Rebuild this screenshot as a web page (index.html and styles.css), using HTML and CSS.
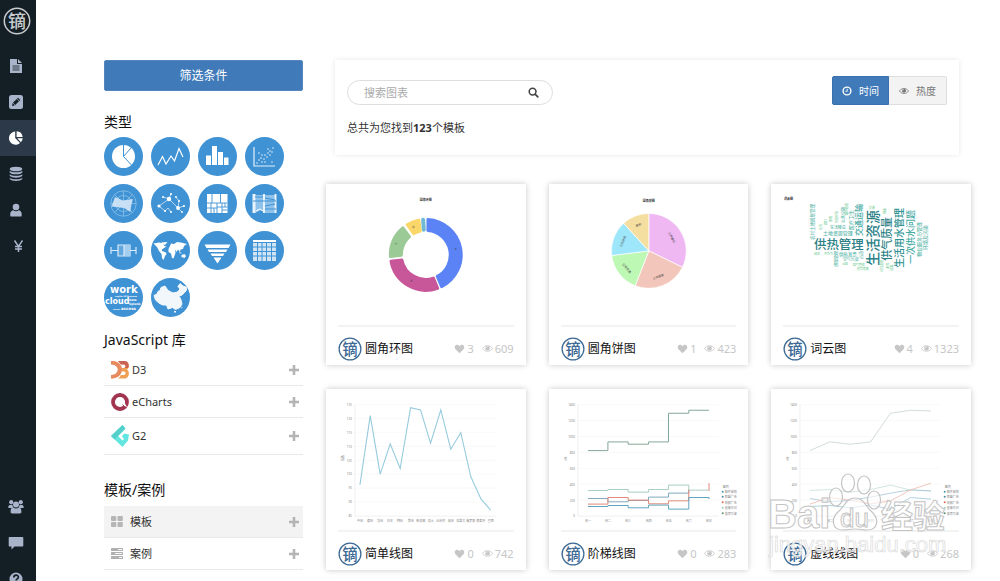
FILE: index.html
```html
<!DOCTYPE html>
<html lang="zh-CN">
<head>
<meta charset="utf-8">
<title>图表模板</title>
<link rel="stylesheet" href="styles.css">
</head>
<body>
<svg class="defs" aria-hidden="true">
  <defs>
    <symbol id="logo" viewBox="0 0 28 28">
      <circle cx="14" cy="14" r="12.7" fill="none" stroke="currentColor" stroke-width="1.5"/>
      <text class="logo-text" x="14" y="20.500" text-anchor="middle">镝</text>
    </symbol>
    <symbol id="heart" viewBox="0 0 12 12"><path d="M6 11L1.200 6.300C-0.800 4 0.600 1 3 1C4.500 1 5.400 1.700 6 2.800C6.600 1.700 7.500 1 9 1C11.400 1 12.800 4 10.800 6.300z" fill="currentColor"/></symbol>
    <symbol id="eye" viewBox="0 0 14 10"><path d="M.6 5C3.600.3 10.400.3 13.400 5 10.400 9.600 3.600 9.600.6 5z" fill="none" stroke="currentColor" stroke-width="1.100"/><circle cx="7" cy="4.600" r="2.900" fill="currentColor"/><path d="M5.300 4.400A1.800 1.800 0 0 1 7 2.700" fill="none" stroke="#fff" stroke-width=".7"/></symbol>
    <symbol id="plus" viewBox="0 0 10 10"><path d="M5 .5v9M.5 5h9" stroke="currentColor" stroke-width="2.600" stroke-linecap="round" fill="none"/></symbol>
    <symbol id="axes" viewBox="0 0 200 141">
      <path d="M29 15.700H170M29 31.600H170M29 47.600H170M29 63.500H170M29 79.500H170M29 95.400H170M29 111.400H170" stroke="#f6f6f6" stroke-width=".7"/>
      <path d="M29 15.700V127.300H170" fill="none" stroke="#ececec" stroke-width=".8"/>
      <g class="tick" text-anchor="end"><text x="26" y="17">1400</text><text x="26" y="33">1200</text><text x="26" y="49">1000</text><text x="26" y="65">800</text><text x="26" y="81">600</text><text x="26" y="97">400</text><text x="26" y="113">200</text><text x="26" y="128">0</text></g>
      <text class="tick" x="15" y="71">值</text>
      <g class="tick" text-anchor="middle"><text x="39" y="133">周一</text><text x="59" y="133">周二</text><text x="79" y="133">周三</text><text x="100" y="133">周四</text><text x="120" y="133">周五</text><text x="140" y="133">周六</text><text x="160" y="133">周日</text></g>
      <g class="tick"><text x="174" y="99">图例</text><text x="176" y="104">邮件营销</text><text x="176" y="109">联盟广告</text><text x="176" y="115">视频广告</text><text x="176" y="120">直接访问</text><text x="176" y="126">搜索引擎</text></g>
      <circle cx="174" cy="102.800" r="1" fill="#3e9bb5"/><circle cx="174" cy="108" r="1" fill="#4c8aa8"/><circle cx="174" cy="113.500" r="1" fill="#dc6b55"/><circle cx="174" cy="119" r="1" fill="#9fcdbf"/><circle cx="174" cy="124.500" r="1" fill="#5f917c"/>
    </symbol>
  </defs>
</svg>

<div class="app">
  <nav class="rail" aria-label="主导航">
    <a class="rail-logo" href="#home" aria-label="首页"><svg><use href="#logo"/></svg></a>
    <a class="rail-item" href="#files" aria-label="文件"><svg viewBox="0 0 14 16"><path fill="currentColor" d="M1 1h7v5h5v9H1z"/><path fill="currentColor" d="M9 1l4 4H9z"/><path d="M3.500 8h7M3.500 10h7M3.500 12h7" stroke="#141e25" stroke-width=".8"/></svg></a>
    <a class="rail-item" href="#edit" aria-label="编辑"><svg viewBox="0 0 14 16"><rect y="1" width="14" height="14" rx="2.500" fill="currentColor"/><path d="M3 12l.7-3L9 3.700 11.300 6 6 11.300z" fill="#141e25"/><path d="M8 5l2.200 2.200M4 9l2 2" stroke="#a9b4cb" stroke-width=".7"/></svg></a>
    <a class="rail-item rail-active" href="#charts" aria-label="图表"><svg viewBox="0 0 14 16"><path fill="currentColor" d="M6.200 1.500V8l4.800 5A6.600 6.600 0 1 1 6.200 1.500z"/><path fill="currentColor" d="M7.600 1.200a6.400 6.400 0 0 1 6 5.800h-6zM8.200 8.200h5.500a6 6 0 0 1-1.800 4z"/></svg></a>
    <a class="rail-item" href="#data" aria-label="数据"><svg viewBox="0 0 14 16"><g fill="currentColor"><ellipse cx="7" cy="3" rx="6.300" ry="2.300"/><path d="M.7 4.800c2 2 10.600 2 12.600 0v1.600c-1.500 2.600-11.100 2.600-12.600 0zM.7 8.300c2 2 10.600 2 12.600 0v1.500c-1.500 2.600-11.100 2.600-12.600 0zM.7 11.700c2 2 10.600 2 12.600 0v1.400c-1.500 2.600-11.100 2.600-12.600 0z"/></g></svg></a>
    <a class="rail-item" href="#user" aria-label="用户"><svg viewBox="0 0 14 16"><circle cx="7" cy="5" r="3.300" fill="currentColor"/><path d="M1.500 14.500c-1-4 1-6 2.700-6.200 1.600 1.300 4 1.300 5.600 0 1.700.2 3.700 2.200 2.700 6.200z" fill="currentColor"/></svg></a>
    <a class="rail-item" href="#price" aria-label="价格"><svg viewBox="0 0 14 16"><path d="M5.500 2.500l4 6 4-6M9.500 8v6M6 8.500h7M6 11h7" fill="none" stroke="currentColor" stroke-width="1.500"/></svg></a>
    <div class="rail-bottom">
      <a class="rail-item" href="#team" aria-label="团队"><svg class="wide" viewBox="0 0 16 16"><g fill="currentColor"><circle cx="3.200" cy="3.200" r="2.100"/><circle cx="12.800" cy="3.200" r="2.100"/><circle cx="8" cy="5.500" r="3"/><path d="M.5 9c-.5-2.500.5-3.500 3.800-3.300.2 1.200.5 2 1.200 2.800L3.500 9zM15.500 9c.5-2.500-.5-3.500-3.800-3.300-.2 1.200-.5 2-1.200 2.800l2 .5zM2.800 14c-.8-4 1-5.500 2.600-5.500 1.500 1.200 3.700 1.200 5.200 0 1.600 0 3.400 1.500 2.600 5.500-.2.800-10.200.8-10.400 0z"/></g></svg></a>
      <a class="rail-item" href="#chat" aria-label="消息"><svg class="wide" viewBox="0 0 16 16"><path d="M1.500 2h13q.8 0 .8.800v8q0 .8-.8.800H6.500L3.500 14.500v-2.900h-2q-.8 0-.8-.8v-8q0-.8.8-.8z" fill="currentColor"/></svg></a>
      <a class="rail-item" href="#help" aria-label="帮助"><svg viewBox="0 0 14 16"><circle cx="7" cy="8" r="6.500" fill="currentColor"/><path d="M4.800 6.500c0-3.200 4.600-3 4.600-.3 0 1.700-2.300 1.600-2.300 3.200M7 10.500v1.700" fill="none" stroke="#141e25" stroke-width="1.700"/></svg></a>
    </div>
  </nav>

  <aside class="filters">
    <button class="filter-button" type="button">筛选条件</button>

    <h2 class="heading">类型</h2>
    <div class="types">
      <button class="type" type="button" aria-label="饼图"><svg viewBox="0 0 39 39"><circle cx="19.500" cy="19.500" r="11.500" fill="#fff"/><path d="M19.500 8v11.500l7.500-8.500M19.500 19.500l8 8.500" fill="none" stroke="#3f92d4" stroke-width="1"/></svg></button>
      <button class="type" type="button" aria-label="折线图"><svg viewBox="0 0 39 39"><path d="M7 28L11.500 19.500L15 27L20 19L23.500 24L28 11.500L32 20" fill="none" stroke="#fff" stroke-width="1.200"/></svg></button>
      <button class="type" type="button" aria-label="柱状图"><svg viewBox="0 0 39 39"><path d="M8 18.500h5V28H8zM14 9h5v19h-5zM20 15h5v13h-5zM26 20.500h4.500V28H26z" fill="#fff"/></svg></button>
      <button class="type" type="button" aria-label="散点图"><svg viewBox="0 0 39 39"><path d="M9 10v19h21" fill="none" stroke="#e5f0fa" stroke-width="1.200"/><path d="M12 26h.01M14 23h.01M17 25h.01M16 21h.01M19 22h.01M20 18h.01M17 18h.01M22 20h.01M23 16h.01M25 14h.01M28 11h.01M27 15h.01M20 25h.01M25 18h.01M27 25h.01M14 16h.01M23 12h.01" stroke="#fff" stroke-width="1.400" stroke-linecap="round"/></svg></button>
      <button class="type" type="button" aria-label="雷达图"><svg viewBox="0 0 39 39"><g fill="none" stroke="#8cc1ea" stroke-width=".8"><circle cx="19.500" cy="19.500" r="12.700"/><circle cx="19.500" cy="19.500" r="8"/><path d="M19.500 7v25M7 19.500h25M10.500 10.500l18 18M28.500 10.500l-18 18"/></g><path d="M11 13L19 16.500L29 15L27 21L26.500 28L20 24L7.500 22.500z" fill="#d4e7f7" opacity=".9"/></svg></button>
      <button class="type" type="button" aria-label="关系图"><svg viewBox="0 0 39 39"><path d="M18 15L8 22M18 15l9 9 6-2M18 15l2-5M18 15l-6-2M14 27l3-3 3 4M8 22l6 5M27 24l1-7-3-4M27 24l4 4" fill="none" stroke="#d9eaf8" stroke-width=".8"/><g fill="#fff"><circle cx="18" cy="15" r="2.200"/><circle cx="27" cy="24" r="1.900"/><circle cx="8" cy="22" r="1.600"/><circle cx="20" cy="10" r="1.100"/><circle cx="12" cy="13" r="1"/><circle cx="14" cy="27" r="1.100"/><circle cx="20" cy="28" r="1"/><circle cx="33" cy="22" r="1.100"/><circle cx="28" cy="17" r="1"/><circle cx="25" cy="13" r="1"/><circle cx="31" cy="28" r=".9"/></g></svg></button>
      <button class="type" type="button" aria-label="矩形树图"><svg viewBox="0 0 39 39"><path d="M9 10h20.500v19H9z" fill="#fff"/><path d="M9 19h20.500M14 10v9M22.500 10v9M19 19v10M9 24h10M13 19v10M24 19v10M19 23h10.500M24 26h5.500M27 19v4M16 24v5" fill="none" stroke="#3f92d4" stroke-width=".9"/></svg></button>
      <button class="type" type="button" aria-label="桑基图"><svg viewBox="0 0 39 39"><path d="M10 11h21v18H20l-4-3-6 3z" fill="#8fc2eb"/><path d="M7.500 10h3v19h-3zM18 10h2v19h-2zM29.500 10h2v19h-2z" fill="#e9f3fb"/><path d="M8 17h23M20 14l10 2M20 22l10-2M20 25h11M10 13h8" stroke="#3f92d4" fill="none"/><path d="M11 27l4-2 3 2" fill="none" stroke="#fff"/></svg></button>
      <button class="type" type="button" aria-label="箱线图"><svg viewBox="0 0 39 39"><path d="M14 14h12v11H14z" fill="#62a8df" stroke="#d9eaf8" stroke-width="1.200"/><path d="M20 14h6v11h-6z" fill="#a4cef0"/><path d="M20 14v11M7 16v7M32 16v7M7 19.500h7M26 19.500h6" stroke="#d9eaf8" stroke-width="1.200" fill="none"/></svg></button>
      <button class="type" type="button" aria-label="世界地图"><svg viewBox="0 0 39 39"><path fill="#fff" d="M2.500 12.500L8 11.500L12 12.500L13.500 15L15.500 15.500L13 17L11 18.500L11 20L15 21.500L15.500 23L14 25L12.500 29L11 27L10.500 23L8 20L6 16L4 14zM10 11.500L16.500 11L14 14zM17.500 18L19 15L20 12.500L23 13L26 11L30 11.500L36 13L33 15L32 18L29.500 18.500L29 21L27 18.500L25.500 21L24 18.500L24.500 22L22.500 27.500L21 27L20 22.500L17.500 21zM30.500 24L33.500 23L35 25L33.500 27L30.500 26zM28 21L31 22L29 22.500z"/></svg></button>
      <button class="type" type="button" aria-label="漏斗图"><svg viewBox="0 0 39 39"><path fill="#fff" d="M6.500 13.500h26l-2 3.500h-22zM9.500 18.500h20l-1.500 2.500H11zM12.500 22.500h14L25 25H14zM15.500 26.500h8l-4 6z"/></svg></button>
      <button class="type" type="button" aria-label="表格"><svg viewBox="0 0 39 39"><path d="M8 9h23v21H8z" fill="#cfe5f6"/><path d="M8 11.500h23M8 16h23M8 20.500h23M8 25h23M12.500 12v18M17 12v18M21.500 12v18M26.500 12v18" stroke="#3f92d4"/><path d="M8 9h23v2H8z" fill="#fff"/></svg></button>
      <button class="type" type="button" aria-label="词云"><svg class="cloud-icon" viewBox="0 0 39 39"><text x="6" y="15" font-size="10">work</text><text x="1" y="26" font-size="8">cloud</text><text x="11" y="19" font-size="2">csgilhs lifl Business</text><text x="25" y="23" font-size="3">data</text><text x="25" y="27" font-size="3">Splunk</text><text x="17" y="32" font-size="4">access</text><text x="9" y="32" font-size="2">server</text></svg></button>
      <button class="type" type="button" aria-label="中国地图"><svg viewBox="0 0 39 39"><path fill="#f2f7fc" stroke="#f2f7fc" stroke-linejoin="round" d="M3 17.500L6 16L7 13.500L9 12.500L10 9.500L14 8L17 12.500L22 15L26.500 14L29 11L27 8.500L29 5.500L32 8L36 9.500L35 13L31 17L27.500 18.500L29 19.500L30 22L31 26L29 29.500L24.500 31.500L21.500 29.500L17 31L15.500 27L12 27L8.500 25.500L4.500 22z"/><path fill="#f2f7fc" d="M23 33h2v1.500h-2zM30.500 28.500l1 .5-.7 2z"/></svg></button>
    </div>

    <h2 class="heading">JavaScript 库</h2>
    <ul class="list">
      <li class="row"><svg class="lib-icon" viewBox="0 0 18 18"><path d="M0 0h2c12 1 12 16 0 17.500H0V14c9-.5 9-10 0-10.500z" fill="#e78a5d"/><path d="M7 0h6c5.500 0 6 6.500 3 8.500 3.500 2.500 2 9-3 9H7c1.500-1 2-2 3-3.500h3c2 0 2-3.500 0-3.500h-2V7h2c2 0 2-3.500 0-3.500h-3C9 2 8 1 7 0z" fill="#f0a052"/><path d="M7 0h6c5 0 5.500 5 4 7h-6V7h2c2 0 2-3.500 0-3.500h-3z" fill="#c96354"/></svg><span class="row-name">D3</span><button class="add" type="button" aria-label="展开 D3"><svg><use href="#plus"/></svg></button></li>
      <li class="row"><svg class="lib-icon" viewBox="0 0 18 18"><circle cx="9" cy="9" r="7" fill="none" stroke="#a23450" stroke-width="3.800"/><path d="M9.500 9l4 .5 2.500 4.500-3-1z" fill="#fff"/><path d="M11.500 11.500l2 2" stroke="#a23450" stroke-width="1"/></svg><span class="row-name">eCharts</span><button class="add" type="button" aria-label="展开 eCharts"><svg><use href="#plus"/></svg></button></li>
      <li class="row row-tall"><svg class="lib-icon lib-g2" viewBox="0 0 18 22"><path d="M11.500 0l3 3.500L7 11l4.500 4.500 1.500-1.500-2-2.500 2-3 5 1-1 6-5.500 6.500L0 11z" fill="#62e6df"/><path d="M11.500 0l3 3.500L7 11l-3.500 3.500L0 11z" fill="#54cfca"/></svg><span class="row-name">G2</span><button class="add" type="button" aria-label="展开 G2"><svg><use href="#plus"/></svg></button></li>
    </ul>

    <h2 class="heading heading-spaced">模板/案例</h2>
    <ul class="list">
      <li class="row row-selected"><svg class="kind-icon" viewBox="0 0 12 11"><g fill="#b5b5b5"><rect width="5.300" height="5" rx="1"/><rect x="6.500" width="5.300" height="5" rx="1"/><rect y="6" width="5.300" height="5" rx="1"/><rect x="6.500" y="6" width="5.300" height="5" rx="1"/></g></svg><span class="row-name">模板</span><button class="add" type="button" aria-label="展开模板"><svg><use href="#plus"/></svg></button></li>
      <li class="row"><svg class="kind-icon" viewBox="0 0 12 11"><g fill="#b0b0b0"><rect width="12" height="3" rx=".5"/><rect y="4" width="12" height="3" rx=".5"/><rect y="8" width="12" height="3" rx=".5"/></g><path d="M7 1.500h4M4 5.500h7M8 9.500h3" stroke="#fff" stroke-width=".9"/></svg><span class="row-name">案例</span><button class="add" type="button" aria-label="展开案例"><svg><use href="#plus"/></svg></button></li>
    </ul>
  </aside>

  <main class="content">
    <section class="panel">
      <div class="panel-left">
        <form class="search">
          <input class="search-input" type="search" placeholder="搜索图表" aria-label="搜索图表">
          <button class="search-button" type="button" aria-label="搜索"><svg viewBox="0 0 12 12"><circle cx="5" cy="5" r="3.700" fill="none" stroke="#444" stroke-width="1.700"/><path d="M8 8l2.700 2.700" stroke="#444" stroke-width="1.900" stroke-linecap="round"/></svg></button>
        </form>
        <p class="count">总共为您找到<b>123</b>个模板</p>
      </div>
      <div class="sort">
        <button class="sort-button sort-active" type="button" aria-pressed="true"><svg viewBox="0 0 10 10"><circle cx="5" cy="5" r="3.900" fill="none" stroke="currentColor" stroke-width="1.400"/><path d="M5.200 2.800v2.500H3.500" fill="none" stroke="currentColor" stroke-width=".9"/></svg>时间</button>
        <button class="sort-button" type="button" aria-pressed="false"><svg><use href="#eye"/></svg>热度</button>
      </div>
    </section>

    <section class="cards">
      <article class="card">
        <svg class="chart" viewBox="0 0 200 141">
          <text class="chart-title" x="100" y="17" text-anchor="middle">圆角环图</text>
          <g stroke-width="3" stroke-linejoin="round">
            <path d="M102.100 35.600A35.500 35.500 0 0 1 115.800 102.800L111.500 92.600A24.500 24.500 0 0 0 102.100 46.600z" fill="#5b83f5" stroke="#5b83f5"/>
            <path d="M111.900 104.400A35.500 35.500 0 0 1 65.100 77.400L76 76.100A24.500 24.500 0 0 0 107.600 94.300z" fill="#c8579a" stroke="#c8579a"/>
            <path d="M64.500 72.600A35.500 35.500 0 0 1 77 44L83.600 52.800A24.500 24.500 0 0 0 75.500 71.400z" fill="#9bca96" stroke="#9bca96"/>
            <path d="M81.400 40.800A35.500 35.500 0 0 1 93 36.200L94.500 47.100A24.500 24.500 0 0 0 87.800 49.800z" fill="#fbd669" stroke="#fbd669"/>
            <path d="M97.300 35.900L98 45.800" stroke="#6fb9d5" stroke-width="4" stroke-linecap="round"/>
          </g>
          <g class="slice" text-anchor="middle"><text transform="translate(129 65) rotate(80)">A</text><text transform="translate(85 98) rotate(30)">B</text><text transform="translate(71 60) rotate(-70)">C</text><text transform="translate(88 44) rotate(-20)">D</text></g>
        </svg>
        <footer class="card-footer"><svg class="avatar"><use href="#logo"/></svg><a class="card-title" href="#t1">圆角环图</a><span class="stat"><svg class="i-heart"><use href="#heart"/></svg>3</span><span class="stat"><svg class="i-eye"><use href="#eye"/></svg>609</span></footer>
      </article>

      <article class="card">
        <svg class="chart" viewBox="0 0 200 141">
          <text class="chart-title" x="100" y="18" text-anchor="middle">圆角饼图</text>
          <g stroke="#fff" stroke-width=".7" stroke-linejoin="round">
            <path d="M100 67V29.500A37.500 37.500 0 0 1 133.700 83.400z" fill="#efb8f3"/>
            <path d="M100 67L133.700 83.400A37.500 37.500 0 0 1 86.300 101.900z" fill="#f3c6bb"/>
            <path d="M100 67L86.300 101.900A37.500 37.500 0 0 1 62.800 71.600z" fill="#bdf8b5"/>
            <path d="M100 67L62.800 71.600A37.500 37.500 0 0 1 74.700 39.300z" fill="#9ee7fb"/>
            <path d="M100 67L74.700 39.300A37.500 37.500 0 0 1 100 29.500z" fill="#f5dfa0"/>
          </g>
          <g class="slice" text-anchor="middle"><text transform="translate(122 54) rotate(62)">公共建设</text><text transform="translate(110 94) rotate(-20)">公共服务</text><text transform="translate(77 85) rotate(50)">公共交通</text><text transform="translate(75 58) rotate(-66)">公共环境</text><text transform="translate(90 42) rotate(-20)">其他</text></g>
        </svg>
        <footer class="card-footer"><svg class="avatar"><use href="#logo"/></svg><a class="card-title" href="#t2">圆角饼图</a><span class="stat"><svg class="i-heart"><use href="#heart"/></svg>1</span><span class="stat"><svg class="i-eye"><use href="#eye"/></svg>423</span></footer>
      </article>

      <article class="card">
        <svg class="chart words" viewBox="0 0 200 141">
          <text class="chart-title" x="13" y="16">词云图</text>
          <g class="words-main" fill="#2c7f86"><text x="43" y="65" font-size="12.500">供热管理</text><text transform="translate(107 82) rotate(-90)" font-size="14">生活资源</text><text transform="translate(120 77) rotate(-90)" font-size="11">供气质量</text></g>
          <g class="words-main" fill="#2f9191"><text transform="translate(132 84) rotate(-90)" font-size="10">生活用水管理</text></g>
          <g class="words-main" fill="#46a9a3"><text transform="translate(143 80) rotate(-90)" font-size="9">一次供水问题</text><text transform="translate(91 52) rotate(-90)" font-size="8">交通运输</text></g>
          <g class="words-main" fill="#5fb9ac" font-size="5"><text transform="translate(150 73) rotate(-90)">物业服务与管理</text><text transform="translate(156 66) rotate(-90)">环境及污染</text><text transform="translate(43 56) rotate(-90)" font-size="4.500">农村土地规划管理</text><text x="52" y="51">土地资源管理</text><text x="59" y="45" font-size="4">生活噪音</text><text transform="translate(82 46) rotate(-90)">医疗卫生</text><text transform="translate(74 39) rotate(-90)" font-size="4">公共设施</text><text x="68" y="72" font-size="4.500">供热发票</text><text x="72" y="77" font-size="4">空气污染</text><text transform="translate(67 83) rotate(-90)" font-size="4">供暖管理</text><text transform="translate(92 75) rotate(-90)" font-size="4">占道</text></g>
          <g class="words-main" fill="#7bcf9a" font-size="3"><text transform="translate(67 39) rotate(-90)">市容环境</text><text transform="translate(77 31) rotate(-90)">噪声管理</text><text transform="translate(61 38) rotate(-90)">照明</text><text transform="translate(56 41) rotate(-90)">路灯</text><text transform="translate(51 46) rotate(-90)">信号</text><text x="43" y="71">绿化</text><text x="53" y="71">不作为</text><text x="71" y="81">公园</text><text x="82" y="82">煤气管道</text><text x="86" y="86">违章建筑</text><text x="98" y="25">交通</text><text transform="translate(112 88) rotate(-90)">垃圾清理</text><text transform="translate(118 85) rotate(-90)">水库</text><text transform="translate(115 30) rotate(-90)">排水</text><text transform="translate(122 87) rotate(-90)">道路</text></g>
        </svg>
        <footer class="card-footer"><svg class="avatar"><use href="#logo"/></svg><a class="card-title" href="#t3">词云图</a><span class="stat"><svg class="i-heart"><use href="#heart"/></svg>4</span><span class="stat"><svg class="i-eye"><use href="#eye"/></svg>1323</span></footer>
      </article>

      <article class="card">
        <svg class="chart" viewBox="0 0 200 141">
          <path d="M29 15.700H170M29 29.600H170M29 43.500H170M29 57.500H170M29 71.400H170M29 85.300H170M29 99.300H170M29 113.200H170" stroke="#f6f6f6" stroke-width=".7"/>
          <path d="M29 15.700V127.300H170" fill="none" stroke="#ececec" stroke-width=".8"/>
          <g class="tick" text-anchor="end"><text x="26" y="17">125</text><text x="26" y="31">120</text><text x="26" y="45">115</text><text x="26" y="59">110</text><text x="26" y="73">105</text><text x="26" y="86">100</text><text x="26" y="100">95</text><text x="26" y="114">90</text><text x="26" y="128">85</text></g>
          <text class="tick" transform="translate(18 72) rotate(-90)">指数</text>
          <g class="tick" text-anchor="middle"><text x="34" y="133">中国</text><text x="44" y="133">德国</text><text x="54" y="133">法国</text><text x="64" y="133">日本</text><text x="74" y="133">韩国</text><text x="85" y="133">美国</text><text x="95" y="133">新加坡</text><text x="105" y="133">瑞士</text><text x="115" y="133">比利时</text><text x="125" y="133">英国</text><text x="135" y="133">加拿大</text><text x="145" y="133">俄罗斯</text><text x="155" y="133">葡萄牙</text><text x="165" y="133">巴西</text></g>
          <path d="M34 96L44.300 26.700 54.300 85.300 64.300 55 74.300 79.700 84.700 18.700 94.700 21 104.700 54.300 115 21 125 60.300 135 43.700 145 87.700 155.300 110.300 165 121.300" fill="none" stroke="#96cbdd" stroke-width="1.100"/>
        </svg>
        <footer class="card-footer"><svg class="avatar"><use href="#logo"/></svg><a class="card-title" href="#t4">简单线图</a><span class="stat"><svg class="i-heart"><use href="#heart"/></svg>0</span><span class="stat"><svg class="i-eye"><use href="#eye"/></svg>742</span></footer>
      </article>

      <article class="card">
        <svg class="chart" viewBox="0 0 200 141">
          <use href="#axes"/>
          <g fill="none" stroke-width="1">
            <path d="M39 61.700H59V53H79.300V55.300H99.700V53H119.700V24.300H140V21.300H160.300" stroke="#84a898"/>
            <path d="M39 101.700H59V100.700H79.300V103.300H99.700V100.700H119.700V96.300H140V101.300H160" stroke="#a8cfc2"/>
            <path d="M39 109.700H59V113H79.300V111.700H99.700V108.300H119.700V104.300H140V101" stroke="#7fa9bd"/>
            <path d="M39 115.300H59V108.700H79.300V111.300H99.700V115H119.700V112H140V101M160.300 102V94.300" stroke="#e08a78"/>
            <path d="M39 117.700H59V116.700H79.300V119H99.700V116.300H119.700V120.300H140V108.700H160.300V110.300" stroke="#5ea5bf"/>
          </g>
        </svg>
        <footer class="card-footer"><svg class="avatar"><use href="#logo"/></svg><a class="card-title" href="#t5">阶梯线图</a><span class="stat"><svg class="i-heart"><use href="#heart"/></svg>0</span><span class="stat"><svg class="i-eye"><use href="#eye"/></svg>283</span></footer>
      </article>

      <article class="card">
        <svg class="chart" viewBox="0 0 200 141">
          <use href="#axes"/>
          <g fill="none" stroke-width=".8">
            <path d="M39 61.700L59 53 79.300 55.300 99.700 53 119.700 24.300 140 21.300 160.300 22" stroke="#c5d3d0"/>
            <path d="M39 101.700L59 100.700 79.300 103.300 99.700 100.700 119.700 96.300 140 101.300 160.300 102.300" stroke="#c5dfd7"/>
            <path d="M39 109.700L59 113 79.300 111.700 99.700 108.300 119.700 104.300 140 101 160.300 102" stroke="#a4c5d3"/>
            <path d="M39 115.300L59 108.700 79.300 111.300 99.700 115 119.700 112 140 101 160.300 94.300" stroke="#edb9ae"/>
            <path d="M39 117.700L59 116.700 79.300 119 99.700 116.300 119.700 120.300 140 108.700 160.300 110.300" stroke="#9ac8d8"/>
          </g>
        </svg>
        <footer class="card-footer"><svg class="avatar"><use href="#logo"/></svg><a class="card-title" href="#t6">虚线线图</a><span class="stat"><svg class="i-heart"><use href="#heart"/></svg>0</span><span class="stat"><svg class="i-eye"><use href="#eye"/></svg>268</span></footer>
        <svg class="watermark" viewBox="0 0 184 92">
          <g class="mark-big"><text x="1" y="57" font-size="40">Bai</text><text x="114" y="57" font-size="32">经验</text></g>
          <g class="mark-shape"><ellipse cx="81" cy="12" rx="6.500" ry="9"/><ellipse cx="97" cy="14" rx="6.500" ry="9"/><ellipse cx="69" cy="26" rx="6.500" ry="9"/><ellipse cx="107" cy="29" rx="6.500" ry="9"/><path d="M88 27c9 0 10 8 16 13 9 8 7 19-4 19-5 0-7-1-12-1s-7 1-12 1c-11 0-13-11-4-19 6-5 7-13 16-13z"/></g>
          <text class="mark-du" x="73" y="56">du</text>
          <text class="mark-url" x="2" y="81">jingyan.baidu.com</text>
        </svg>
      </article>
    </section>
  </main>
</div>
</body>
</html>
```
FILE: styles.css
```css
* {
  box-sizing: border-box;
}

body {
  margin: 0;
  background: #fff;
  color: #333;
  font-family: "Noto Sans", "Noto Sans CJK SC", sans-serif;
  font-size: 11px;
  line-height: 16px;
}

button,
input {
  margin: 0;
  padding: 0;
  border: 0;
  background: none;
  color: inherit;
  font: inherit;
}

button {
  cursor: pointer;
}

svg {
  display: block;
}

a {
  color: inherit;
  text-decoration: none;
}

.defs {
  position: absolute;
  width: 0;
  height: 0;
}

.app {
  display: flex;
  align-items: flex-start;
}

/* Navigation rail */

.rail {
  position: sticky;
  top: 0;
  display: flex;
  flex: none;
  flex-direction: column;
  width: 36px;
  height: 100vh;
  overflow: hidden;
  background: #141e25;
  color: #a9b4cb;
}

.rail-logo {
  flex: none;
  height: 48px;
  padding: 7px 3px;
  color: #c9cccf;
}

.rail-logo svg {
  width: 28px;
  height: 28px;
}

.rail-item {
  display: flex;
  flex: none;
  align-items: center;
  justify-content: center;
  height: 36px;
  padding-right: 4px;
}

.rail-item svg {
  width: 14px;
  height: 16px;
}

.rail-item .wide {
  width: 16px;
}

.rail-active {
  background: #2c3948;
  color: #fff;
}

.rail-bottom {
  margin-top: auto;
  margin-bottom: -16px;
}

/* Filters */

.filters {
  flex: none;
  width: 199px;
  margin-left: 68px;
  padding-top: 60px;
}

.filter-button {
  display: block;
  width: 100%;
  height: 31px;
  border: 1px solid #5486bd;
  border-radius: 2px;
  background: #407ab9;
  color: #fff;
  font-size: 12px;
}

.heading {
  margin: 21px 0 5px;
  color: #111;
  font-size: 14px;
  font-weight: 400;
  line-height: 20px;
}

.types + .heading {
  margin: 13px 0 4px;
}

.heading-spaced {
  margin: 25px 0 6px;
}

.types {
  display: grid;
  grid-template-columns: repeat(4, 39px);
  gap: 8px;
}

.type {
  width: 39px;
  height: 39px;
  overflow: hidden;
  border-radius: 50%;
  background: #3f92d4;
}

.type svg {
  width: 39px;
  height: 39px;
}

.cloud-icon {
  fill: #fff;
  font-family: "DejaVu Sans", sans-serif;
  font-weight: 700;
}

.list {
  margin: 0;
  padding: 0;
  list-style: none;
}

.row {
  display: flex;
  align-items: center;
  height: 32px;
  padding: 0 4px 0 7px;
  border-bottom: 1px solid #e9e9e9;
}

.row-tall {
  height: 37px;
}

.row-selected {
  background: #f3f3f3;
}

.row-name {
  flex: 1;
}

.lib-icon {
  width: 18px;
  height: 18px;
  margin-right: 3px;
}

.lib-g2 {
  height: 22px;
}

.kind-icon {
  width: 12px;
  height: 11px;
  margin-right: 7px;
}

.add {
  color: #b4b4b4;
}

.add svg {
  width: 10px;
  height: 10px;
}

/* Content */

.content {
  flex: 1;
  min-width: 0;
  padding: 60px 29px 8px 23px;
}

.panel {
  display: flex;
  align-items: flex-start;
  justify-content: space-between;
  margin: 0 12px 29px 9px;
  padding: 16px 12px 19px;
  background: #fff;
  box-shadow: 0 0 5px rgba(0, 0, 0, 0.1);
}

.panel-left {
  width: 206px;
  padding-top: 4px;
}

.search {
  display: flex;
  align-items: center;
  height: 25px;
  padding: 0 13px 0 16px;
  border: 1px solid #dedede;
  border-radius: 13px;
}

.search-input {
  flex: 1;
  min-width: 0;
  outline: 0;
}

.search-input::placeholder {
  color: #aaa;
}

.search-button svg {
  width: 11px;
  height: 11px;
}

.count {
  margin: 15px 0 0;
}

.sort {
  display: flex;
}

.sort-button {
  display: flex;
  align-items: center;
  justify-content: center;
  gap: 7px;
  width: 58px;
  height: 29px;
  border: 1px solid #dedede;
  border-left: 0;
  border-radius: 0 2px 2px 0;
  background: #f3f3f3;
  color: #777;
  font-size: 10px;
}

.sort-button svg {
  width: 10px;
  height: 10px;
}

.sort-active {
  width: 57px;
  border: 1px solid #3a70ab;
  border-radius: 2px 0 0 2px;
  background: #407ab9;
  color: #fff;
}

.cards {
  display: grid;
  grid-template-columns: repeat(3, minmax(0, 1fr));
  gap: 24px 23px;
}

.card {
  position: relative;
  background: #fff;
  box-shadow: 0 0 6px rgba(0, 0, 0, 0.22);
}

.chart {
  width: 100%;
}

.card-footer {
  display: flex;
  align-items: center;
  height: 40px;
  margin: 0 12px;
  padding-top: 6px;
  border-top: 2px solid #f3f3f3;
}

.avatar {
  width: 24px;
  height: 24px;
  color: #3d6a95;
}

.card-title {
  flex: 1;
  margin-left: 3px;
  color: #111;
  font-size: 12px;
}

.stat {
  display: flex;
  align-items: center;
  gap: 2px;
  margin-left: 8px;
  color: #c6c6c6;
}

.i-heart {
  width: 11px;
  height: 10px;
}

.i-eye {
  width: 11px;
  height: 9px;
}

/* Chart text */

.logo-text {
  fill: currentColor;
  font-size: 18px;
  font-weight: 500;
}

.chart-title {
  fill: #333;
  font-size: 3px;
  font-weight: 700;
}

.slice {
  fill: #444;
  font-size: 3px;
}

.tick {
  fill: #888;
  font-size: 3px;
}

.words {
  font-family: "Noto Sans CJK SC", sans-serif;
}

.words-main {
  font-weight: 500;
}

/* Watermark */

.watermark {
  position: absolute;
  top: 82px;
  left: -4px;
  width: 184px;
  height: 92px;
  pointer-events: none;
  font-family: "Liberation Sans", "Noto Sans CJK SC", sans-serif;
  stroke: #c4c4c4;
  stroke-width: 1;
  fill: #fff;
  fill-opacity: 0.6;
}

.mark-big {
  font-weight: 700;
}

.mark-shape {
  stroke-width: 1.2;
}

.mark-du {
  font-size: 26px;
}

.mark-url {
  font-size: 22px;
  stroke: #d6d6d6;
  stroke-width: 0.6;
  fill-opacity: 0.8;
}
```
